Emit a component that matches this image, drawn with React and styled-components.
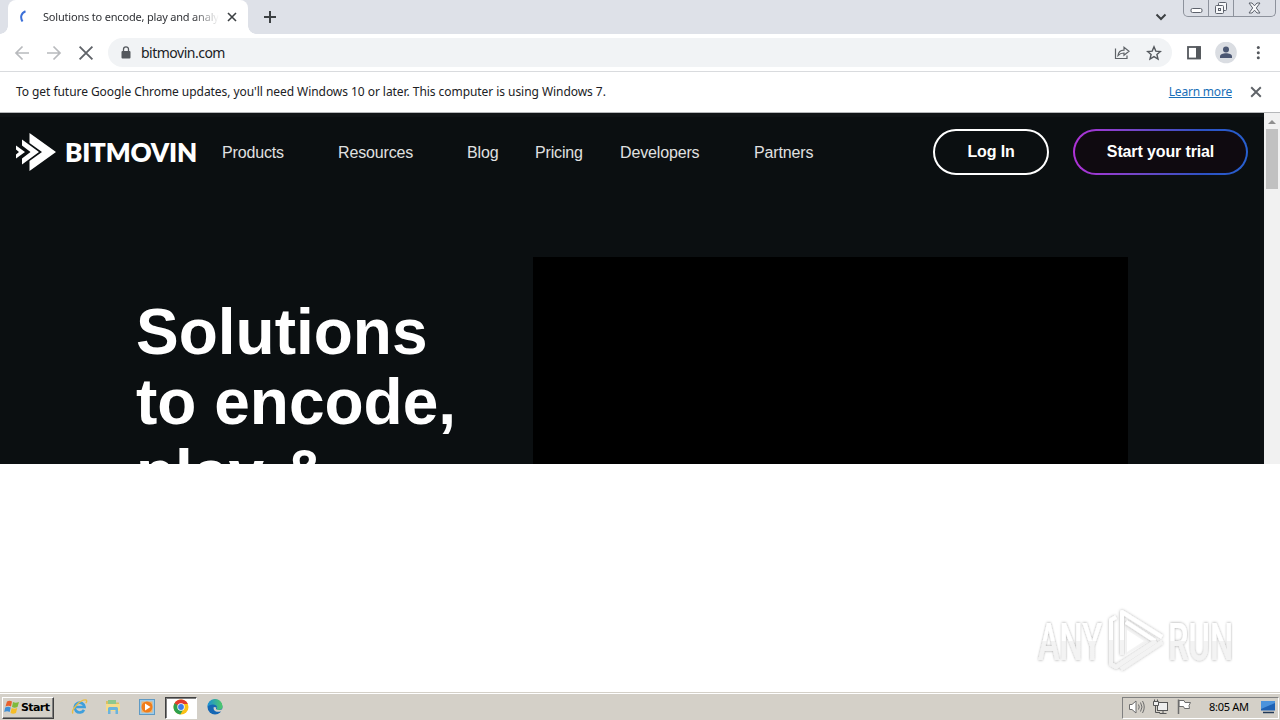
import React from "react";
import styled, { createGlobalStyle, css } from "styled-components";

const GlobalStyle = createGlobalStyle`
  * {
    box-sizing: border-box;
  }
  body {
    margin: 0;
    background: #fff;
    overflow: hidden;
  }
  svg {
    display: block;
    flex-shrink: 0;
  }
`;

const Screen = styled.div`
  width: 1280px;
  height: 720px;
  display: flex;
  flex-direction: column;
  overflow: hidden;
  background: #fff;
  font-family: "Noto Sans", "Open Sans", sans-serif;
  color: #202124;
`;

/* browser chrome */

const TabStrip = styled.div`
  height: 34px;
  flex-shrink: 0;
  display: flex;
  background: #dee1e8;
`;

const Tab = styled.div`
  position: relative;
  width: 240px;
  margin-left: 8px;
  padding: 0 8px 0 12px;
  display: flex;
  align-items: center;
  background: #fff;
  border-radius: 8px 8px 0 0;

  &::before,
  &::after {
    content: "";
    position: absolute;
    bottom: 0;
    width: 8px;
    height: 8px;
  }
  &::before {
    left: -8px;
    background: radial-gradient(circle at 0 0, #dee1e8 7.5px, #fff 8px);
  }
  &::after {
    right: -8px;
    background: radial-gradient(circle at 100% 0, #dee1e8 7.5px, #fff 8px);
  }
`;

const TabTitle = styled.span`
  width: 176px;
  margin: 0 8px 0 11px;
  overflow: hidden;
  white-space: nowrap;
  font-size: 11px;
  line-height: 16px;
  letter-spacing: -0.19px;
  color: #303236;
  mask-image: linear-gradient(to right, #000 150px, transparent 176px);
`;

const NewTab = styled.div`
  display: flex;
  align-items: center;
  margin-left: 15px;
`;

const StripEnd = styled.div`
  display: flex;
  margin-left: auto;
  padding-right: 4px;
`;

const TabSearch = styled.div`
  display: flex;
  align-items: center;
  margin-right: 16px;
`;

const WindowButtons = styled.div`
  display: flex;
  height: 17px;
  border: 1px solid #8d929c;
  border-top: none;
  border-radius: 0 0 5px 5px;
  background: #dcdfe6;
`;

const WindowButton = styled.div`
  width: ${({ $w }) => $w}px;
  display: flex;
  align-items: center;
  justify-content: center;

  & + & {
    border-left: 1px solid #8d929c;
  }
`;

const Toolbar = styled.div`
  height: 38px;
  flex-shrink: 0;
  display: flex;
  align-items: center;
  padding-left: 14px;
  background: #fff;
  border-bottom: 1px solid #d9dbde;
`;

const NavIcons = styled.div`
  display: flex;
  gap: 16px;
  width: 94px;
`;

const AddressBar = styled.div`
  height: 29px;
  width: 1064px;
  flex-shrink: 0;
  display: flex;
  align-items: center;
  padding: 0 10px;
  border-radius: 15px;
  background: #f1f3f5;
`;

const Url = styled.span`
  flex: 1;
  margin-left: 7px;
  font-size: 14px;
  line-height: 18px;
  letter-spacing: -0.5px;
`;

const AddressActions = styled.div`
  display: flex;
  gap: 16px;
`;

const ToolbarActions = styled.div`
  display: flex;
  align-items: center;
  gap: 13px;
  margin-left: 14px;
`;

const InfoBar = styled.div`
  height: 41px;
  flex-shrink: 0;
  display: flex;
  align-items: center;
  padding: 0 18px 1px 16px;
  background: #fff;
  border-bottom: 1px solid #b6b8ba;
  font-size: 12px;
  line-height: 16px;
`;

const InfoText = styled.span`
  flex: 1;
  letter-spacing: -0.055px;
`;

const LearnMore = styled.a`
  margin-right: 18px;
  letter-spacing: -0.2px;
  color: #1a6fb8;
  text-decoration: underline;
`;

/* page */

const Viewport = styled.div`
  height: 351px;
  flex-shrink: 0;
  display: flex;
  overflow: hidden;
`;

const Page = styled.main`
  width: 1264px;
  background: #0b0f11;
  border-top: 4px solid #101416;
  color: #fff;
  font-family: "Liberation Sans", Arial, sans-serif;
`;

const Header = styled.header`
  height: 70px;
  display: flex;
  align-items: center;
  padding: 0 16px;
`;

const Logo = styled.div`
  width: 206px;
  display: flex;
  align-items: center;
`;

const LogoName = styled.span`
  margin-left: 7px;
  font-family: Lato, sans-serif;
  font-weight: 800;
  font-size: 26px;
  line-height: 36px;
  letter-spacing: -0.2px;
`;

const Menu = styled.nav`
  display: flex;
  padding-top: 2px;
`;

const MenuItem = styled.a`
  width: ${({ $w }) => $w}px;
  font-size: 16px;
  line-height: 20px;
  font-weight: 300;
  letter-spacing: -0.15px;
  color: #e0e1e1;
`;

const Actions = styled.div`
  display: flex;
  gap: 24px;
  margin-left: auto;
`;

const PillButton = styled.button`
  width: ${({ $w }) => $w}px;
  height: 46px;
  padding: 0;
  border: 2px solid #fff;
  border-radius: 23px;
  background: transparent;
  color: #fff;
  font: bold 16px "Liberation Sans", Arial, sans-serif;
  letter-spacing: -0.13px;

  ${({ $gradient }) =>
    $gradient &&
    css`
      border-color: transparent;
      background:
        linear-gradient(#0f0a10, #0f0a10) padding-box,
        linear-gradient(to right, #b032d8, #7546c8 35%, #2c52c4 75%, #2860d0) border-box;
    `}
`;

const Hero = styled.section`
  display: flex;
  padding: 70px 0 0 136px;
`;

const HeroTitle = styled.h1`
  width: 397px;
  margin: 40px 0 0;
  font-size: 64px;
  line-height: 70.4px;
  font-weight: 700;
`;

const Video = styled.div`
  width: 595px;
  height: 335px;
  background: #000;
`;

const ScrollBar = styled.div`
  width: 16px;
  display: flex;
  flex-direction: column;
  align-items: center;
  background: #f1f1f1;
`;

const ScrollArrow = styled.div`
  height: 16px;
  display: flex;
  align-items: center;
  padding-top: 2px;
`;

const ScrollThumb = styled.div`
  width: 12px;
  height: 60px;
  background: #c1c1c1;
`;

const Blank = styled.div`
  flex: 1;
  display: flex;
  justify-content: flex-end;
  align-items: flex-end;
  padding: 0 40px 16px 0;
`;

/* taskbar */

const Taskbar = styled.div`
  height: 28px;
  flex-shrink: 0;
  display: flex;
  align-items: center;
  padding: 2px 1px 0 2px;
  border-top: 1px solid #d4d0c8;
  box-shadow: inset 0 1px #fff;
  background: #d4d0c8;
`;

const StartButton = styled.div`
  width: 52px;
  height: 22px;
  display: flex;
  align-items: center;
  padding: 0 0 1px 1px;
  gap: 1px;
  border: 1px solid;
  border-color: #fff #404040 #404040 #fff;
  box-shadow: inset -1px -1px #808080;
  font-family: "DejaVu Sans", sans-serif;
  font-weight: 700;
  font-size: 11px;
  letter-spacing: -0.6px;
  color: #000;
`;

const QuickLaunch = styled.div`
  display: flex;
  align-items: center;
  margin-left: 8px;
`;

const TaskIcon = styled.div`
  width: 34px;
  height: 22px;
  padding-bottom: 2px;
  display: flex;
  align-items: center;
  justify-content: center;

  ${({ $active }) =>
    $active &&
    css`
      width: 32px;
      margin: 0 1px;
      background: #fff;
      border: 1px solid;
      border-color: #404040 #fff #fff #404040;
      box-shadow: inset 1px 1px #808080;
    `}
`;

const Tray = styled.div`
  width: 157px;
  height: 22px;
  margin-left: auto;
  display: flex;
  align-items: center;
  padding: 0 1px 2px 5px;
  border: 1px solid;
  border-color: #808080 #fff #fff #808080;
`;

const TrayIcons = styled.div`
  display: flex;
  gap: 7px;
`;

const Clock = styled.span`
  margin: 0 9px 0 17px;
  width: 42px;
  white-space: nowrap;
  font-size: 11px;
  line-height: 14px;
  letter-spacing: -0.3px;
  color: #000;
`;

const Cross = ({ size, color = "#5f6368", width = 1.8 }) => (
  <svg width={size} height={size} viewBox="0 0 10 10">
    <path d="M1 1l8 8M9 1L1 9" stroke={color} strokeWidth={width} fill="none" />
  </svg>
);

const Arrow = ({ flip }) => (
  <svg width="16" height="16" viewBox="0 0 16 16">
    <path
      d="M15 8H2M8.5 1.5L2 8l6.5 6.5"
      transform={flip ? "matrix(-1 0 0 1 16 0)" : undefined}
      stroke="#b8babd"
      strokeWidth="1.7"
      fill="none"
    />
  </svg>
);

const Watermark = () => (
  <svg width="206" height="72" viewBox="1034 604 206 72">
    <defs>
      <linearGradient id="letters" gradientUnits="userSpaceOnUse" x1="0" y1="-38" x2="0" y2="0">
        <stop offset="0.5" stopColor="#fff" />
        <stop offset="0.5" stopColor="#f3f3f3" />
      </linearGradient>
      <linearGradient id="mark" gradientUnits="userSpaceOnUse" x1="0" y1="610" x2="0" y2="670">
        <stop offset="0.5" stopColor="#fff" />
        <stop offset="0.5" stopColor="#f3f3f3" />
      </linearGradient>
      <filter id="soft" filterUnits="userSpaceOnUse" x="1034" y="604" width="206" height="72">
        <feDropShadow dx="0" dy="0" stdDeviation="1.6" floodColor="#000" floodOpacity="0.32" />
      </filter>
      <filter id="softText" x="-10%" y="-20%" width="120%" height="140%">
        <feDropShadow dx="0" dy="0" stdDeviation="2 1.4" floodColor="#000" floodOpacity="0.38" />
      </filter>
    </defs>
    <g fill="url(#letters)" fontFamily="Roboto, sans-serif" fontWeight="500" fontSize="52">
      <text
        transform="translate(1038 660) scale(0.64 1)"
        textLength="100"
        lengthAdjust="spacingAndGlyphs"
        filter="url(#softText)"
      >
        ANY
      </text>
      <text
        transform="translate(1168 660) scale(0.64 1)"
        textLength="102"
        lengthAdjust="spacingAndGlyphs"
        filter="url(#softText)"
      >
        RUN
      </text>
    </g>
    <path d="M1126 620v35l28-17z" fill="#f4f4f4" />
    <path d="M1127 630v22l17-11z" fill="#fff" />
    <g filter="url(#soft)" fill="none" stroke="url(#mark)" strokeWidth="4" strokeLinejoin="round">
      <path d="M1122 655V612l40 25" />
      <path d="M1116 617l-5 3v44l5 3 40-26" />
      <path d="M1121 669l41-27M1126 622l29 19" />
    </g>
  </svg>
);

const menu = [
  { label: "Products", w: 116 },
  { label: "Resources", w: 129 },
  { label: "Blog", w: 68 },
  { label: "Pricing", w: 85 },
  { label: "Developers", w: 134 },
  { label: "Partners", w: 70 },
];

const App = () => {
  return (
    <>
      <GlobalStyle />
      <Screen>
        <TabStrip>
          <Tab>
            <svg width="12" height="14" viewBox="0 0 12 14">
              <path d="M5.500 1.200C1 3 0 7.500 2.500 11.500" stroke="#3b6fd8" strokeWidth="2" fill="none" />
            </svg>
            <TabTitle>Solutions to encode, play and analyze</TabTitle>
            <Cross size={10} color="#3c4043" width={1.6} />
          </Tab>
          <NewTab>
            <svg width="14" height="14" viewBox="0 0 14 14">
              <path d="M7 1v12M1 7h12" stroke="#3c4043" strokeWidth="2" />
            </svg>
          </NewTab>
          <StripEnd>
            <TabSearch>
              <svg width="12" height="8" viewBox="0 0 12 8">
                <path d="M1.500 1.500L6 6l4.500-4.500" stroke="#3c4043" strokeWidth="2" fill="none" />
              </svg>
            </TabSearch>
            <WindowButtons>
              <WindowButton $w={24}>
                <svg width="13" height="15" viewBox="0 0 13 15">
                  <rect x="1" y="7.500" width="11" height="4" rx="1.500" fill="#fff" stroke="#5d626c" />
                </svg>
              </WindowButton>
              <WindowButton $w={25}>
                <svg width="14" height="15" viewBox="0 0 14 15" fill="#f7f8fa" stroke="#5d626c">
                  <rect x="4.500" y="1.500" width="8" height="8" rx="1" />
                  <rect x="1.500" y="4.500" width="8" height="8" rx="1" />
                  <rect x="4.500" y="7.500" width="2" height="2" />
                </svg>
              </WindowButton>
              <WindowButton $w={42}>
                <svg width="13" height="12" viewBox="0 0 13 12">
                  <path
                    d="M1 1h3l2.500 2.800L9 1h3L8.300 6l3.700 5H9L6.500 8.200 4 11H1l3.700-5z"
                    fill="#f7f8fa"
                    stroke="#5d626c"
                  />
                </svg>
              </WindowButton>
            </WindowButtons>
          </StripEnd>
        </TabStrip>

        <Toolbar>
          <NavIcons>
            <Arrow />
            <Arrow flip />
            <Cross size={16} width={1.15} />
          </NavIcons>
          <AddressBar>
            <svg width="16" height="16" viewBox="0 0 16 16">
              <rect x="3.500" y="6" width="9" height="7.500" rx="1" fill="#54585d" />
              <path d="M5.500 6.500V4.300a2.500 2.500 0 015 0v2.200" stroke="#54585d" strokeWidth="1.300" fill="none" />
            </svg>
            <Url>bitmovin.com</Url>
            <AddressActions>
              <svg width="16" height="16" viewBox="0 0 16 16" fill="none" stroke="#5f6368" strokeWidth="1.200">
                <path d="M1.500 3.500V13.500h11.500v-3" />
                <path d="M4 10.500c.4-3.600 2.500-5.300 6-5.400V2.300L15 6.300l-5 4V8C7.300 8 5.500 8.800 4 10.500z" />
              </svg>
              <svg width="16" height="16" viewBox="0 0 16 16">
                <path
                  d="M8 1.800l1.800 4.300 4.600.4-3.500 3 1.100 4.500L8 11.600 4 14l1.100-4.500-3.500-3 4.600-.4z"
                  fill="none"
                  stroke="#54585d"
                  strokeWidth="1.400"
                />
              </svg>
            </AddressActions>
          </AddressBar>
          <ToolbarActions>
            <svg width="16" height="16" viewBox="0 0 16 16">
              <rect x="2" y="2" width="12" height="11.500" fill="#fff" stroke="#54585d" strokeWidth="1.800" />
              <path d="M10 1.500h4.800v12.500H10z" fill="#54585d" />
            </svg>
            <svg width="22" height="22" viewBox="0 0 22 22">
              <circle cx="11" cy="10.500" r="10.800" fill="#dadde2" />
              <circle cx="11" cy="7.500" r="3" fill="#4b5772" />
              <path d="M5 16v-1.600c0-2 3-3.200 6-3.200s6 1.200 6 3.200V16z" fill="#4b5772" />
            </svg>
            <svg width="20" height="16" viewBox="0 0 20 16" fill="#54585d">
              <circle cx="8.300" cy="2.600" r="1.500" />
              <circle cx="8.300" cy="7.700" r="1.500" />
              <circle cx="8.300" cy="12.800" r="1.500" />
            </svg>
          </ToolbarActions>
        </Toolbar>

        <InfoBar>
          <InfoText>
            To get future Google Chrome updates, you'll need Windows 10 or later. This computer is using Windows 7.
          </InfoText>
          <LearnMore>Learn more</LearnMore>
          <Cross size={12} width={1.6} />
        </InfoBar>

        <Viewport>
          <Page>
            <Header>
              <Logo>
                <svg width="42" height="40" viewBox="0 0 42 40" fill="#fff">
                  <path d="M13.500 1L40 20 13.500 39v-10L26 20 13.500 11z" />
                  <path d="M6 7.500L23 20 6 32.500v-6L14.500 20 6 13.500z" />
                  <path d="M0 13.500L9 20l-9 6.500v-4L3 20l-3-2.500z" />
                </svg>
                <LogoName>BITMOVIN</LogoName>
              </Logo>
              <Menu>
                {menu.map(({ label, w }) => (
                  <MenuItem key={label} $w={w}>{label}</MenuItem>
                ))}
              </Menu>
              <Actions>
                <PillButton $w={116}>Log In</PillButton>
                <PillButton $w={175} $gradient>Start your trial</PillButton>
              </Actions>
            </Header>
            <Hero>
              <HeroTitle>
                Solutions
                <br />
                to encode,
                <br />
                play &amp;
              </HeroTitle>
              <Video />
            </Hero>
          </Page>
          <ScrollBar>
            <ScrollArrow>
              <svg width="8" height="4" viewBox="0 0 8 4">
                <path d="M0 4l4-4 4 4z" fill="#8f8f8f" />
              </svg>
            </ScrollArrow>
            <ScrollThumb />
          </ScrollBar>
        </Viewport>

        <Blank>
          <Watermark />
        </Blank>

        <Taskbar>
          <StartButton>
            <svg width="16" height="16" viewBox="0 0 16 16">
              <path d="M3 2.500q2.500-1.500 5 0L7 7.500q-2.500-1.500-5.500 0z" fill="#e8602c" />
              <path d="M9 3q2.500 1.500 6 0l-1.500 5q-3 1.500-5.500 0z" fill="#7fba3c" />
              <path d="M1.200 8.500q3-1.500 5.500 0L5.700 13q-2.500-1.500-5.500 0z" fill="#3f8fd6" />
              <path d="M7.700 9q2.500 1.500 5.500 0L12 14q-3 1.500-5.500 0z" fill="#f6bd27" />
            </svg>
            Start
          </StartButton>
          <QuickLaunch>
            <TaskIcon>
              <svg width="17" height="17" viewBox="0 0 17 17" fill="none">
                <path d="M13 11.800A4.900 4.900 0 1113.500 9H4.500" stroke="#3f9fdc" strokeWidth="2.700" />
                <path d="M2 15.500C-.5 12.500 9.500 1 15 2c1.200.5.600 2-.2 3.200" stroke="#e9bd45" strokeWidth="1.400" />
              </svg>
            </TaskIcon>
            <TaskIcon>
              <svg width="16" height="16" viewBox="0 0 16 16">
                <path d="M1 2h5l1.500 1.500H14V12H1z" fill="#dcbf62" />
                <path d="M3 1h8v5H3z" fill="#8ec88d" />
                <path d="M1 5h14v7H1z" fill="#f5dc8b" />
                <path d="M3 15V9.500Q3 8 4.500 8h7Q13 8 13 9.500V15h-2.500v-4h-5v4z" fill="#6bb4dc" />
              </svg>
            </TaskIcon>
            <TaskIcon>
              <svg width="16" height="16" viewBox="0 0 16 16">
                <rect x="0.500" y="0.500" width="15" height="15" fill="#9ccbea" stroke="#5f9ac4" />
                <rect x="2.500" y="2.500" width="11" height="11" fill="#f3b36c" />
                <circle cx="8" cy="8" r="5.500" fill="#f07d1a" />
                <path d="M6 4.500L11.500 8 6 11.500z" fill="#fff" />
              </svg>
            </TaskIcon>
            <TaskIcon $active>
              <svg width="16" height="16" viewBox="0 0 16 16">
                <circle cx="8" cy="8" r="7.500" fill="#fbc116" />
                <path d="M8 8L1.500 4.250A7.500 7.500 0 0114.500 4.250L14.700 5H8z" fill="#e33b2e" />
                <path d="M1.500 4.250A7.500 7.500 0 007.300 15.500L10.800 9.500 8 8z" fill="#2da04e" />
                <path d="M1.500 4.250L5 9.500 8 5z" fill="#e33b2e" />
                <path d="M1.500 4.250L5 10l3-2z" fill="#2da04e" />
                <circle cx="8" cy="8" r="3.700" fill="#fff" />
                <circle cx="8" cy="8" r="2.900" fill="#3e7ce8" />
              </svg>
            </TaskIcon>
            <TaskIcon>
              <svg width="16" height="16" viewBox="0 0 16 16">
                <defs>
                  <linearGradient id="edge" x1="0" y1="0" x2="1" y2="0">
                    <stop offset="0" stopColor="#1b8fd8" />
                    <stop offset="1" stopColor="#4fca67" />
                  </linearGradient>
                </defs>
                <circle cx="8" cy="8" r="7.500" fill="#1667b4" />
                <path d="M.5 8a7.500 7.500 0 0115-1c.3 3-2 4-4 4-1.500 0-2.500-.5-1.700-1.500C11 7.500 8.500 5.500 6 5.500S1.200 6.500.5 8z" fill="url(#edge)" />
                <path d="M6.800 8c-1 3.500 2 5.500 6.700 4.500L15 13l1-3-3 1c-3 .5-5-1-3.500-2.500z" fill="#d4d0c8" />
              </svg>
            </TaskIcon>
          </QuickLaunch>
          <Tray>
            <TrayIcons>
              <svg width="17" height="16" viewBox="0 0 17 16" stroke="#6d6d6d" fill="none">
                <path d="M1.500 5.500H4L8 2v12l-4-3.500H1.500z" fill="#fff" />
                <path d="M10.500 5.500q1.500 2.500 0 5M12.500 3.500q3 4.500 0 9M14.500 2q3.500 6 0 12" />
              </svg>
              <svg width="17" height="16" viewBox="0 0 17 16" stroke="#555" fill="#eee">
                <rect x="5.500" y="3.500" width="10" height="8" />
                <path d="M7.500 14.500h7M11 12v2.500M3.500 6v7.500H8" fill="none" />
                <path d="M1.500 2.500h5v4h-5zM2.500 0.500v2M5.500 0.500v2" />
              </svg>
              <svg width="16" height="16" viewBox="0 0 16 16" stroke="#6d6d6d" fill="#fff">
                <path d="M3 1.500h5l1 2h5.500l-1.500 3 .5 3H8.500l-1-2H3z" />
                <path d="M2.500 0.500v14.500" strokeWidth="1.500" />
              </svg>
            </TrayIcons>
            <Clock>8:05 AM</Clock>
            <svg width="16" height="14" viewBox="0 0 16 14">
              <path d="M1 1h14v9.500H1z" fill="#1f62b4" />
              <path d="M1 1h14v2L1 9z" fill="#4b93dc" />
              <path d="M3 12.500h11" stroke="#223a58" strokeWidth="1.500" />
            </svg>
          </Tray>
        </Taskbar>
      </Screen>
    </>
  );
};

export default App;
